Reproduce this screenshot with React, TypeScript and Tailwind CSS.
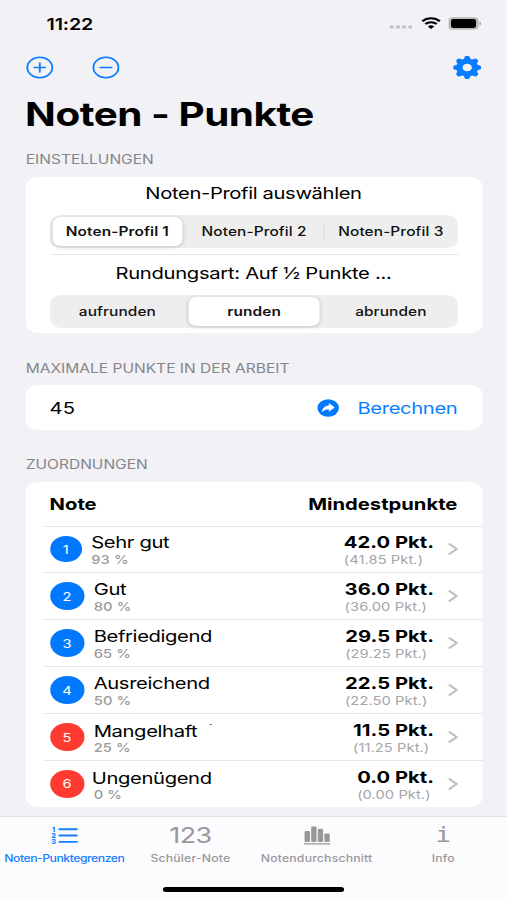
import clsx from 'clsx'

interface Grade {
  id: number
  name: string
  percent: string
  points: string
  exact: string
  badge: string
  nameClass: string
}

const blueBadge = 'w-[27.5px] h-7 bg-[#0079ff]'
const redBadge = 'w-[27.5px] h-7 bg-[#ff3a30]'

const grades: Grade[] = [
  { id: 1, name: 'Sehr gut', percent: '93 %', points: '42.0 Pkt.', exact: '(41.85 Pkt.)', badge: 'w-[25.5px] h-[26px] bg-[#0079ff]', nameClass: '' },
  { id: 2, name: 'Gut', percent: '80 %', points: '36.0 Pkt.', exact: '(36.00 Pkt.)', badge: blueBadge, nameClass: '' },
  { id: 3, name: 'Befriedigend', percent: '65 %', points: '29.5 Pkt.', exact: '(29.25 Pkt.)', badge: blueBadge, nameClass: '' },
  { id: 4, name: 'Ausreichend', percent: '50 %', points: '22.5 Pkt.', exact: '(22.50 Pkt.)', badge: blueBadge, nameClass: '' },
  { id: 5, name: 'Mangelhaft', percent: '25 %', points: '11.5 Pkt.', exact: '(11.25 Pkt.)', badge: redBadge, nameClass: 'relative top-px' },
  { id: 6, name: 'Ungenügend', percent: '0 %', points: '0.0 Pkt.', exact: '(0.00 Pkt.)', badge: redBadge, nameClass: 'relative top-[1.5px] -left-[1.5px]' }
]

const profiles = ['Noten-Profil 1', 'Noten-Profil 2', 'Noten-Profil 3']
const roundings = ['aufrunden', 'runden', 'abrunden']

function StatusBar() {
  return (
    <div className="flex h-[46px] items-center pl-[38px] pr-[21.5px]">
      <span className="mt-px text-[16px] font-semibold tracking-[-0.1px]">11:22</span>
      <div className="ml-auto flex items-center">
        <svg className="mt-2 mr-[6.5px] h-1 w-[19px]" viewBox="0 0 19 4" fill="#c1c1c6">
          <circle cx="2" cy="2" r="1.8" />
          <circle cx="7" cy="2" r="1.8" />
          <circle cx="12" cy="2" r="1.8" />
          <circle cx="17" cy="2" r="1.8" />
        </svg>
        <svg className="mr-[6px] h-3 w-4" viewBox="0 0 16 12" fill="none" stroke="#000" strokeWidth="2.1">
          <path d="M0.8 4.3C4.8 0.2 11.2 0.2 15.2 4.3" />
          <path d="M3.4 7.1C6 4.6 10 4.6 12.6 7.1" />
          <path d="M8 12L5.4 9.4C6.8 8 9.2 8 10.6 9.4Z" fill="#000" stroke="none" />
        </svg>
        <svg className="h-[13px] w-[27px]" viewBox="0 0 27 13" fill="none">
          <rect x="0.2" y="0.2" width="24.6" height="12.6" rx="3.6" fill="#b9b9bc" />
          <rect x="2.3" y="2.1" width="20.4" height="8.8" rx="1.8" fill="#000" />
          <path d="M25.5 4.4C27.3 5.2 27.3 7.8 25.5 8.6Z" fill="#a5a5a8" />
        </svg>
      </div>
    </div>
  )
}

function Toolbar() {
  return (
    <div className="flex h-[42px] items-center pl-[21px] pr-[21.5px] text-[#087dff]">
      <svg className="h-[23px] w-[23px]" viewBox="0 0 23 23" fill="none" stroke="currentColor" strokeWidth="1.5" strokeLinecap="round">
        <circle cx="11.5" cy="11.5" r="10.2" />
        <path d="M11.5 7V16M7 11.5H16" />
      </svg>
      <svg className="ml-[31px] h-[23px] w-[23px]" viewBox="0 0 23 23" fill="none" stroke="currentColor" strokeWidth="1.5" strokeLinecap="round">
        <circle cx="11.5" cy="11.5" r="10.2" />
        <path d="M6.8 11.5H16.2" />
      </svg>
      <svg className="ml-auto h-[23px] w-[23px]" viewBox="-11.5 -11.5 23 23" fill="none">
        <circle r="6.4" stroke="currentColor" strokeWidth="5.2" />
        {[0, 45, 90, 135, 180, 225, 270, 315].map((a) => (
          <path
            key={a}
            d="M-3 -7.6L-2.1 -10.4Q-1.8 -11.4 -0.8 -11.4H0.8Q1.8 -11.4 2.1 -10.4L3 -7.6Z"
            fill="currentColor"
            transform={`rotate(${a})`}
          />
        ))}
      </svg>
    </div>
  )
}

function SectionLabel({ children, className }: { children: string; className?: string }) {
  return (
    <p className={clsx('pl-[21px] text-[12.7px] leading-4 text-[#85858a]', className)}>{children}</p>
  )
}

function Segmented({ items, active }: { items: string[]; active: number }) {
  return (
    <div className="flex h-[33px] items-center rounded-[9px] bg-[#eeeeef] text-[12.6px] font-medium">
      {items.map((item, i) => (
        <div key={item} className="flex h-full flex-1 items-center pr-[3px] last:pr-px">
          <div
            className={clsx(
              'mr-px h-[18px] w-px',
              i > 0 && i !== active && i - 1 !== active && 'bg-[#dcdcde]'
            )}
          ></div>
          <button
            className={clsx(
              'h-[29px] flex-1 whitespace-nowrap rounded-[7px] pt-[2px] tracking-[0.08px] text-[#111]',
              i === active && 'bg-white font-semibold shadow-[0_1px_4px_rgba(0,0,0,0.18)]'
            )}
          >
            {item}
          </button>
        </div>
      ))}
    </div>
  )
}

function GradeRow({ grade }: { grade: Grade }) {
  return (
    <div className="ml-[15.5px] flex h-[46.9px] items-center border-t border-[#e6e6e8] pl-[5px] pr-[20px]">
      <div
        className={clsx(
          'flex items-center justify-center rounded-[50%] pt-px text-[12px] text-white',
          grade.badge
        )}
      >
        {grade.id}
      </div>
      <div className="ml-[8px] pt-[2px]">
        <p className={clsx('text-[16.5px] leading-[19px] tracking-[-0.3px]', grade.nameClass)}>
          {grade.name}
          {grade.id === 5 && (
            <span className="ml-[10px] inline-block h-px w-[2px] bg-[#777] align-[12px]"></span>
          )}
        </p>
        <p className="text-[12px] leading-[15px] font-medium tracking-[0.1px] text-[#9b9b9e]">{grade.percent}</p>
      </div>
      <div className="ml-auto pt-[2px]">
        <p className="text-[16.5px] leading-[19px] font-bold tracking-[0.04px]">{grade.points}</p>
        <p className="text-[12px] leading-[15px] tracking-[0.06px] text-[#a5a5a8]">{grade.exact}</p>
      </div>
      <svg className="ml-[11px] h-3 w-2" viewBox="0 0 8 12" fill="none" stroke="#bebec1" strokeWidth="1.8">
        <path d="M1 1L7 6L1 11" strokeLinecap="round" strokeLinejoin="round" />
      </svg>
    </div>
  )
}

function TabBar() {
  return (
    <div className="h-[84px] border-t border-[#e2e2e6] bg-[#fcfbfe]">
      <div className="flex h-[52px] text-[10px] font-medium text-[#98989b]">
        <div className="flex w-[105px] flex-col items-center text-[#1680ff]">
          <svg className="mt-[9px] h-[19px] w-[22px]" viewBox="0 0 22 19" fill="none" stroke="currentColor" strokeWidth="1.9" strokeLinecap="round">
            <path d="M6.6 3.2H20.6M6.6 9.5H20.6M6.6 15.9H20.6" />
            <g fill="currentColor" stroke="none" fontFamily="Inter" fontSize="6.4" fontWeight="800">
              <text x="0.3" y="5.6">1</text>
              <text x="-0.3" y="12">2</text>
              <text x="-0.3" y="18.4">3</text>
            </g>
          </svg>
          <span className="mt-[5px] leading-4 tracking-[-0.4px] whitespace-nowrap">Noten-Punktegrenzen</span>
        </div>
        <div className="flex w-[101px] flex-col items-center">
          <span className="mt-[7px] text-[22px] leading-[22px] font-normal tracking-[-0.5px]">123</span>
          <span className="mt-[4px] leading-4 tracking-[0.15px]">Schüler-Note</span>
        </div>
        <div className="flex w-[105px] flex-col items-center">
          <svg className="mt-[9px] h-[19px] w-[22px]" viewBox="0 0 22 19" fill="currentColor">
            <rect x="0.7" y="5" width="4.4" height="11" rx="1" />
            <rect x="6.1" y="0.4" width="4.4" height="15.6" rx="1" />
            <rect x="11.5" y="2.8" width="4.4" height="13.2" rx="1" />
            <rect x="16.9" y="7.4" width="4.4" height="8.6" rx="1" />
            <rect x="0" y="17.2" width="22" height="1.3" rx="0.6" />
          </svg>
          <span className="mt-[5px] leading-4 tracking-[0.15px]">Notendurchschnitt</span>
        </div>
        <div className="flex w-[102px] flex-col items-center">
          <span className="mt-[7px] font-['DejaVu_Sans_Mono',monospace] text-[21px] leading-[22px]">i</span>
          <span className="mt-[4px] leading-4 tracking-[0.15px]">Info</span>
        </div>
      </div>
      <div className="mx-auto mt-[18px] h-[5px] w-[148px] rounded-full bg-black"></div>
    </div>
  )
}

function App() {
  return (
    <div className="h-[900px] w-[507px] overflow-hidden bg-[#f1f1f6]">
      {/* 414pt wide screen stretched to the full width */}
      <div className="flex h-[900px] w-[414px] origin-top-left scale-x-[1.2246] flex-col font-['Inter',sans-serif] text-black">
        <StatusBar />
        <Toolbar />
        <h1 className="h-[51px] pl-[20.5px] text-[33px] leading-[52px] font-bold tracking-[-0.4px]">Noten - Punkte</h1>

        <SectionLabel className="mt-[13px]">EINSTELLUNGEN</SectionLabel>
        <div className="mx-[20.5px] mt-[9px] h-[156px] rounded-[10px] bg-white px-[20px]">
          <p className="text-center text-[16.5px] leading-8 tracking-[-0.3px]">Noten-Profil auswählen</p>
          <div className="mt-[6px]">
            <Segmented items={profiles} active={0} />
          </div>
          <div className="mt-[6px] h-px bg-[#e6e6e8]"></div>
          <p className="mt-[3px] text-center text-[16.5px] leading-[31px] tracking-[-0.24px]">Rundungsart: Auf ½ Punkte ...</p>
          <div className="mt-[6px]">
            <Segmented items={roundings} active={1} />
          </div>
        </div>

        <SectionLabel className="mt-[28px]">MAXIMALE PUNKTE IN DER ARBEIT</SectionLabel>
        <div className="mx-[20.5px] mt-[8px] flex h-[45px] items-center rounded-[10px] bg-white px-[20px] text-[16.5px]">
          <span className="pt-px">45</span>
          <div className="ml-auto flex items-center text-[#087dff]">
            <svg className="mr-[15px] h-[18px] w-[18px]" viewBox="0 0 18 18">
              <circle cx="9" cy="9" r="8.8" fill="#0079ff" />
              <path
                d="M9.8 4.6L14 8.5L9.8 12.3V10.1C7.2 10 5.5 10.8 4.2 12.9C4.3 9.3 6.2 7 9.8 6.8Z"
                fill="#fff"
                stroke="#fff"
                strokeWidth="0.5"
                strokeLinejoin="round"
              />
            </svg>
            <span className="pt-px tracking-[-0.3px]">Berechnen</span>
          </div>
        </div>

        <SectionLabel className="mt-[27px]">ZUORDNUNGEN</SectionLabel>
        <div className="mx-[20.5px] mt-[9px] h-[325px] rounded-[10px] bg-white">
          <div className="flex h-[43.5px] items-center justify-between px-[20px] pt-[2px] text-[16.5px] font-bold">
            <span>Note</span>
            <span>Mindestpunkte</span>
          </div>
          {grades.map((grade) => (
            <GradeRow key={grade.id} grade={grade} />
          ))}
        </div>

        <div className="mt-auto">
          <TabBar />
        </div>
      </div>
    </div>
  )
}

export default App
